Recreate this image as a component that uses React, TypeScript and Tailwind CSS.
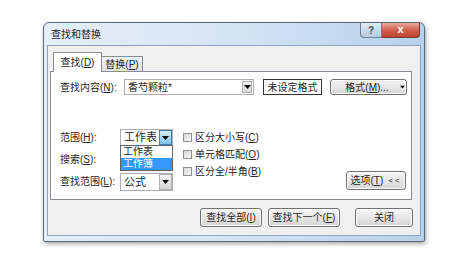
import React from 'react';

function Arrow() {
  return (
    <svg width="7" height="4" viewBox="0 0 7 4">
      <path d="M0 0h7L3.5 4z" fill="#000" />
    </svg>
  );
}

function Key({ children }: { children: React.ReactNode }) {
  return <span className="underline underline-offset-1">{children}</span>;
}

function Button({ children, className = '' }: { children: React.ReactNode; className?: string }) {
  return (
    <div
      className={`flex items-center justify-center rounded-[3px] border border-[#707070] bg-linear-to-b from-[#f4f4f4] via-[#e6e6e6] to-[#d4d4d4] shadow-[inset_0_0_0_1px_#fcfcfc] ${className}`}
    >
      {children}
    </div>
  );
}

function Check({ children }: { children: React.ReactNode }) {
  return (
    <div className="flex h-[17px] items-center gap-[3px]">
      <span className="h-[9px] w-[9px] border border-[#8e8f8f] bg-linear-to-br from-[#d6d6d6] to-[#fafafa]" />
      <span>{children}</span>
    </div>
  );
}

export default function App() {
  return (
    <div className="h-[263px] w-[471px] bg-white pl-[43px] pt-[22px] font-['Liberation_Sans','Noto_Sans_CJK_SC',sans-serif] text-[10px] text-[#262626]">
      <div className="flex h-[220px] w-[382px] flex-col rounded-t-[6px] rounded-b-[2px] border border-[#59687b] bg-linear-to-r from-[#e6eef7] via-[#d5e4f4] to-[#b7d1ec] shadow-[1px_2px_4px_rgba(0,0,0,0.35)]">
        {/* title bar */}
        <div className="flex h-[22px] items-start">
          <span className="pl-[7px] pt-[6px] leading-[12px] text-[#1e1e1e]">查找和替换</span>
          <div className="ml-auto mr-[4px] flex">
            <div className="flex h-[15px] w-[22px] items-center justify-center rounded-bl-[4px] border border-t-0 border-[#6d7f95] bg-linear-to-b from-[#e3ebf4] to-[#b6c8dc] text-[10px] font-bold text-[#3c4f66]">
              ?
            </div>
            <div className="flex h-[15px] w-[38px] items-center justify-center rounded-br-[4px] border border-l-0 border-t-0 border-[#6d3b33] bg-linear-to-b from-[#e9a99c] via-[#d0604c] to-[#c0432e] pb-[2px] text-[11px] font-bold text-white">
              x
            </div>
          </div>
        </div>

        {/* client area */}
        <div className="mx-[3px] mb-[5px] flex h-[191px] flex-col border border-[#8ea3bd] bg-[#f0f0f0]">
          {/* tabs */}
          <div className="ml-[5px] mt-[6px] -mb-px flex h-[20px] items-end">
            <div className="relative z-10 flex h-[20px] w-[49px] items-center justify-center border border-b-0 border-[#898c95] bg-white pb-[1px]">
              查找(<Key>D</Key>)
            </div>
            <div className="flex h-[16px] w-[41px] items-center justify-center border border-l-0 border-[#898c95] bg-linear-to-b from-[#f4f4f4] to-[#e2e2e2]">
              替换(<Key>P</Key>)
            </div>
          </div>

          {/* tab page */}
          <div className="ml-[2px] mr-[8px] flex h-[129px] flex-col border border-[#898c95] bg-white">
            {/* find what row */}
            <div className="ml-[9px] mt-[7px] flex h-[16px] items-center">
              <span className="w-[64px]">
                查找内容(<Key>N</Key>):
              </span>
              <div className="flex h-[16px] w-[130px] items-center border border-[#abadb3] bg-white">
                <span className="flex-1 pl-[3px]">香芍颗粒*</span>
                <span className="mr-px flex h-[12px] w-[10px] items-center justify-center border border-[#b0b0b0] bg-linear-to-b from-[#f2f2f2] to-[#d8d8d8]">
                  <Arrow />
                </span>
              </div>
              <div className="ml-[9px] flex h-[16px] w-[59px] items-center justify-center border border-[#333] bg-white">
                未设定格式
              </div>
              <Button className="ml-[8px] h-[16px] w-[77px] gap-[10px] pl-[14px]">
                <span>
                  格式(<Key>M</Key>)...
                </span>
                <span className="scale-75">
                  <Arrow />
                </span>
              </Button>
            </div>

            {/* options block */}
            <div className="ml-[9px] mt-[34px] flex items-start">
              <div className="grid grid-cols-[60px_53px] grid-rows-[17px_17px_17px] gap-y-[5px]">
                <span className="self-center">
                  范围(<Key>H</Key>):
                </span>
                <div className="relative flex h-[17px] items-stretch border border-[#abadb3] bg-white">
                  <span className="flex flex-1 items-center pl-[3px] text-[11px]">工作表</span>
                  <span className="flex w-[13px] items-center justify-center border border-[#3c7fb1] bg-linear-to-b from-[#d4ecfb] to-[#7fc2ee]">
                    <Arrow />
                  </span>
                  <div className="absolute left-[-1px] top-[15px] z-20 flex w-[53px] flex-col border border-[#646464] bg-white">
                    <span className="h-[12px] pl-[2px] leading-[12px]">工作表</span>
                    <span className="h-[12px] bg-[#3399ff] pl-[2px] leading-[12px] text-white">工作簿</span>
                  </div>
                </div>

                <span className="self-center">
                  搜索(<Key>S</Key>):
                </span>
                <div className="flex h-[17px] border border-[#abadb3] bg-white" />

                <span className="self-center">
                  查找范围(<Key>L</Key>):
                </span>
                <div className="flex h-[18px] items-stretch border border-[#abadb3] bg-white">
                  <span className="flex flex-1 items-center pl-[3px] text-[11px]">公式</span>
                  <span className="flex w-[13px] items-center justify-center border border-[#b0b0b0] bg-linear-to-b from-[#f4f4f4] to-[#d6d6d6]">
                    <Arrow />
                  </span>
                </div>
              </div>

              <div className="ml-[10px] flex flex-col">
                <Check>
                  区分大小写(<Key>C</Key>)
                </Check>
                <Check>
                  单元格匹配(<Key>O</Key>)
                </Check>
                <Check>
                  区分全/半角(<Key>B</Key>)
                </Check>
              </div>

              <Button className="ml-auto mr-[5px] mt-[42px] h-[19px] w-[60px] gap-[5px]">
                <span>
                  选项(<Key>T</Key>)
                </span>
                <span className="text-[8px] tracking-[2px]">&lt;&lt;</span>
              </Button>
            </div>
          </div>

          {/* bottom buttons */}
          <div className="mr-[7px] mt-[8px] flex justify-end">
            <Button className="h-[19px] w-[62px]">
              查找全部(<Key>I</Key>)
            </Button>
            <Button className="ml-[6px] h-[19px] w-[72px] border-[#3c7fb1] shadow-[inset_0_0_0_1px_#a9dcf6]">
              查找下一个(<Key>F</Key>)
            </Button>
            <Button className="ml-[15px] h-[19px] w-[58px]">关闭</Button>
          </div>
        </div>
      </div>
    </div>
  );
}
